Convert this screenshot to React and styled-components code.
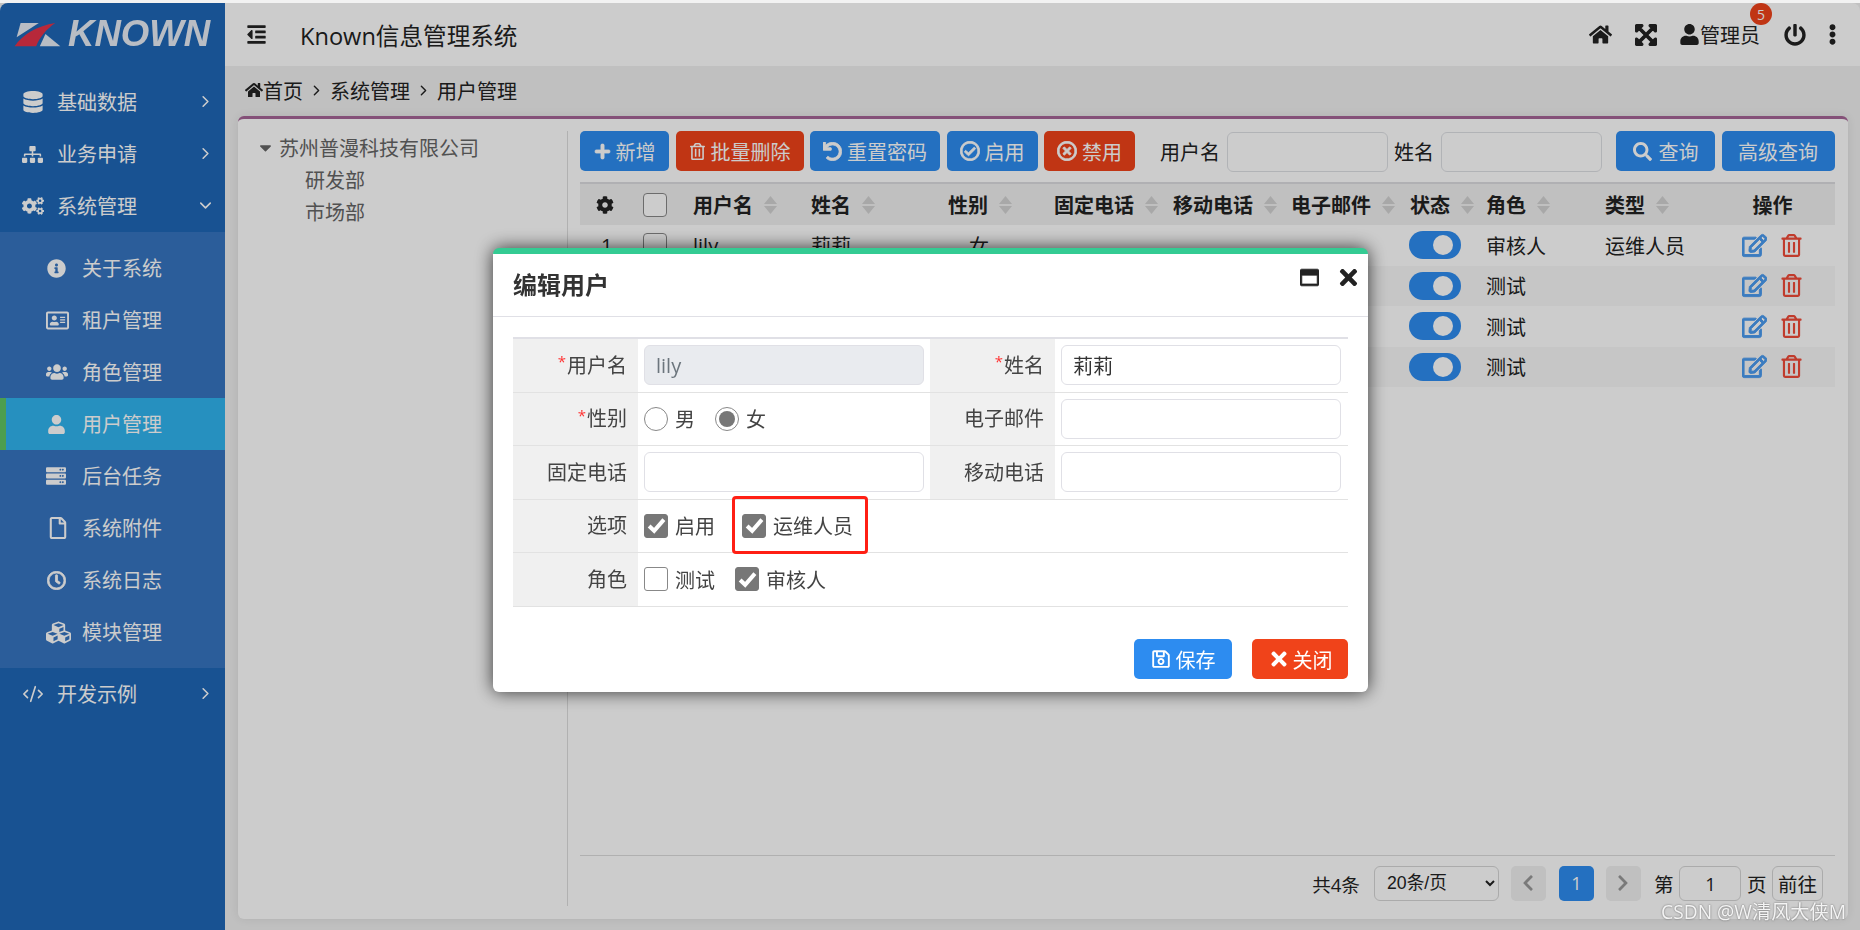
import React from 'react';
import styled, { createGlobalStyle } from 'styled-components';
import {
  FaCaretDown, FaChevronLeft, FaChevronRight, FaCog, FaCogs, FaCubes,
  FaDatabase, FaExpandArrowsAlt, FaEllipsisV, FaHome, FaInfoCircle, FaOutdent,
  FaPlus, FaPowerOff, FaRegAddressCard, FaRegCheckCircle, FaRegClock, FaRegEdit, FaRegFile, FaRegSave,
  FaRegTimesCircle, FaRegTrashAlt, FaRegWindowMaximize, FaSearch, FaServer, FaSitemap, FaTimes, FaUndo,
  FaUser, FaUsers,
} from 'react-icons/fa';
import { ChevronDown, ChevronRight, CodeXml } from 'lucide-react';

const GlobalStyle = createGlobalStyle`
  html, body {
    margin: 0;
    height: 100%;
    overflow: hidden;
    background: #f2f2f2;
  }
  * { box-sizing: border-box; }
  body, input, select, button {
    font-family: "Open Sans", "Noto Sans CJK SC", sans-serif;
    font-size: 20px;
    color: #222;
  }
`;

const Frame = styled.div`
  position: relative;
  display: flex;
  height: 927px;
  margin-top: 3px;
  border-radius: 8px 8px 0 0;
  overflow: hidden;
  background: #f0f0f0;
`;

const Sidebar = styled.aside`
  flex: none;
  width: 225px;
  background: #1e67b7;
  color: #fff;
`;

const Logo = styled.div`
  display: flex;
  align-items: center;
  gap: 7px;
  height: 63px;
  padding-left: 14px;
  margin-bottom: 10px;
`;

const LogoText = styled.span`
  font-family: "Liberation Sans", sans-serif;
  font-weight: 700;
  font-style: italic;
  font-size: 36.6px;
  line-height: 1;
  color: #e8edf5;
  filter: blur(0.5px);
`;

const MenuItem = styled.div`
  display: flex;
  align-items: center;
  height: 52px;
  padding-left: 22px;
  padding-bottom: 2px;
  font-size: 20px;
  background: ${(p) => (p.$active ? '#30b4ef' : 'transparent')};
`;

const SubMenu = styled.div`
  padding: 10px 0;
  background: #3675c1;
`;

const SubItem = styled(MenuItem)`
  padding-left: ${(p) => (p.$active ? '41px' : '47px')};
  border-left: ${(p) => (p.$active ? '6px solid #60c662' : '0')};
`;

const MenuIcon = styled.span`
  display: flex;
  align-items: center;
  width: 35px;
  margin-top: 2px;
  margin-left: ${(p) => p.$shift || 0}px;
  margin-right: ${(p) => -(p.$shift || 0)}px;
`;

const MenuArrow = styled.span`
  display: flex;
  margin-left: auto;
  margin-right: 10px;
`;

const Main = styled.main`
  flex: 1;
  display: flex;
  flex-direction: column;
  min-width: 0;
`;

const Header = styled.header`
  display: flex;
  align-items: center;
  flex: none;
  height: 63px;
  padding-left: 21px;
  background: #fff;
`;

const HeaderTitle = styled.div`
  margin-left: 33px;
  font-size: 23.6px;
`;

const HeaderRight = styled.div`
  display: flex;
  align-items: center;
  margin-left: auto;
  padding-right: 17px;
`;

const HeaderIcon = styled.span`
  display: flex;
  margin-left: ${(p) => p.$gap}px;
  font-size: ${(p) => p.$size}px;
`;

const UserName = styled.span`
  position: relative;
  display: flex;
  align-items: center;
  margin-left: 21px;
`;

const Badge = styled.span`
  position: absolute;
  top: -17px;
  right: -12px;
  display: flex;
  align-items: center;
  justify-content: center;
  width: 22px;
  height: 22px;
  border-radius: 50%;
  background: #f0431a;
  color: #fff;
  font-size: 14px;
`;

const Breadcrumb = styled.nav`
  display: flex;
  align-items: center;
  flex: none;
  height: 50px;
  padding-left: 20px;
  padding-bottom: 2px;
`;

const Crumb = styled.span`
  display: flex;
  align-items: center;
`;

const CrumbSep = styled.span`
  display: flex;
  width: 27px;
  justify-content: center;
`;

const Card = styled.section`
  flex: 1;
  display: flex;
  min-height: 0;
  margin: 0 12px 11px 13px;
  padding: 12px 13px 13px 0;
  background: #fff;
  border-top: 3px solid #a66496;
  border-radius: 6px;
  box-shadow: 0 0 10px rgba(0, 0, 0, 0.08);
`;

const Tree = styled.div`
  flex: none;
  width: 330px;
  padding-left: 18px;
  border-right: 1px solid #dedede;
  color: #666;
`;

const TreeRow = styled.div`
  display: flex;
  align-items: center;
  height: 32px;
  padding-left: ${(p) => (p.$child ? '49px' : '0')};
`;

const TreeCaret = styled.span`
  display: flex;
  width: 23px;
  font-size: 19px;
`;

const RightPane = styled.div`
  flex: 1;
  display: flex;
  flex-direction: column;
  min-width: 0;
  margin-left: 12px;
`;

const Toolbar = styled.div`
  display: flex;
  align-items: center;
  gap: 6.5px;
  height: 40px;
`;

const Button = styled.button`
  display: inline-flex;
  align-items: center;
  justify-content: center;
  gap: ${(p) => p.$gap ?? 5}px;
  flex: none;
  height: 40px;
  margin-left: ${(p) => p.$left || 0}px;
  padding: 0 ${(p) => p.$pad ?? 13}px;
  border: 0;
  border-radius: 5px;
  color: #fff;
  background: ${(p) => (p.$tone === 'danger' ? '#f0431a' : '#2d8cf0')};
`;

const SearchLabel = styled.span`
  flex: none;
  margin-left: ${(p) => p.$gap || 0}px;
`;

const SearchInput = styled.input`
  flex: none;
  width: 161px;
  height: 40px;
  margin-top: 2px;
  border: 1px solid #dee0e4;
  border-radius: 6px;
  background: transparent;
`;

const Table = styled.div`
  flex: 1;
  margin-top: 11px;
`;

const COLUMNS = '53px 50px 118px 137px 106px 119px 118px 119px 76px 119px 119px 121px';

const HeadRow = styled.div`
  display: grid;
  grid-template-columns: ${COLUMNS};
  align-items: center;
  height: 43px;
  border-top: 2px solid #dcdce0;
  background: #f0f0f0;
  font-weight: 700;
`;

const BodyRow = styled.div`
  display: grid;
  grid-template-columns: ${COLUMNS};
  align-items: center;
  height: 40.5px;
  background: ${(p) => (p.$striped ? '#f8f8f8' : '#fff')};
`;

const Cell = styled.div`
  display: flex;
  align-items: center;
  gap: 11px;
  padding-left: ${(p) => p.$pad ?? 10}px;
  white-space: nowrap;
`;

const ActionHead = styled.div`
  padding-right: 4px;
  text-align: center;
`;

const TableCheck = styled.span`
  display: block;
  width: 24px;
  height: 24px;
  border: 1px solid #888;
  border-radius: 4px;
  background: #fff;
`;

const Toggle = styled.span`
  display: flex;
  align-items: center;
  justify-content: flex-end;
  width: 52px;
  height: 28px;
  padding-right: 8px;
  border-radius: 14px;
  background: #2d8cf0;
`;

const ToggleKnob = styled.span`
  width: 20px;
  height: 20px;
  border-radius: 50%;
  background: #fff;
`;

const ActionIcon = styled.span`
  display: flex;
  color: ${(p) => p.$color};
  font-size: ${(p) => p.$size}px;
`;

const Actions = styled.div`
  display: flex;
  align-items: center;
  gap: 13px;
  padding-left: 28px;
`;

const Pager = styled.footer`
  display: flex;
  align-items: center;
  justify-content: flex-end;
  flex: none;
  height: 51px;
  padding: 10px 12px 6px 0;
  border-top: 1px solid #dcdcdc;
  font-size: 19.5px;
`;

const PagerCount = styled.span`
  font-size: 18.6px;
`;

const PagerText = styled.span`
  margin: 0 ${(p) => p.$right}px 0 ${(p) => p.$left}px;
`;

const PageSize = styled.select`
  width: 125px;
  height: 35px;
  margin-left: 14px;
  padding-left: 8px;
  border: 1px solid #d6d6d6;
  border-radius: 6px;
  background: transparent;
  font-family: "Liberation Sans", "Noto Sans CJK SC", sans-serif;
  font-size: 17.7px;
`;

const PageButton = styled.span`
  display: flex;
  align-items: center;
  justify-content: center;
  width: 35px;
  height: 35px;
  margin-left: ${(p) => p.$gap}px;
  border-radius: 5px;
  font-size: 18px;
  color: ${(p) => (p.$current ? '#fff' : '#999')};
  background: ${(p) => (p.$current ? '#2d8cf0' : '#f0f0f0')};
`;

const PageInput = styled.input`
  width: 62px;
  height: 35px;
  border: 1px solid #d6d6d6;
  border-radius: 6px;
  background: transparent;
  text-align: center;
  font-size: 18.6px;
`;

const GoButton = styled.button`
  width: 51px;
  height: 35px;
  padding: 0;
  border: 1px solid #d6d6d6;
  border-radius: 6px;
  background: transparent;
  font-size: 19.5px;
`;

const Overlay = styled.div`
  position: fixed;
  inset: 3px 0 0 0;
  background: rgba(0, 0, 0, 0.2);
`;

const Modal = styled.div`
  position: fixed;
  left: 493px;
  top: 248px;
  display: flex;
  flex-direction: column;
  width: 875px;
  height: 444px;
  border-top: 6px solid #34cb93;
  border-radius: 6px;
  background: #fff;
  box-shadow: 0 0 18px rgba(0, 0, 0, 0.75);
`;

const ModalHead = styled.div`
  display: flex;
  align-items: center;
  flex: none;
  height: 63px;
  padding: 0 7px 0 20px;
  border-bottom: 1px solid #e0e0e6;
`;

const ModalTitle = styled.h3`
  margin: 0 0 4px;
  font-size: 24px;
  font-weight: 700;
  color: #333;
`;

const ModalTools = styled.div`
  display: flex;
  align-items: center;
  gap: 17px;
  margin: 0 0 15px auto;
  color: #222;
`;

const FormTable = styled.div`
  margin: 20px 20px 0;
  border-top: 2px solid #e0e0e6;
`;

const FormRow = styled.div`
  display: grid;
  grid-template-columns: 125px 292px 125px 293px;
  height: 53.5px;
  border-bottom: 1px solid #e2e2e2;
`;

const FormLabel = styled.div`
  display: flex;
  align-items: center;
  justify-content: flex-end;
  padding: 0 11px 2px 0;
  background: #f0f0f0;
  color: #444;
`;

const Required = styled.span`
  align-self: flex-start;
  margin: 12px 1px 0 0;
  color: #f33;
  font-size: 15px;
`;

const FormValue = styled.div`
  position: relative;
  display: flex;
  align-items: center;
  padding-left: 6px;
  grid-column: ${(p) => (p.$wide ? 'span 3' : 'auto')};
`;

const TextInput = styled.input`
  width: 280px;
  height: 40px;
  padding: 0 11px;
  border: 1px solid #e0e0e6;
  border-radius: 6px;
  background: ${(p) => (p.disabled ? '#e9ebef' : '#fff')};
  color: ${(p) => (p.disabled ? '#6c757d' : '#333')};
`;

const Choice = styled.label`
  display: flex;
  align-items: center;
  gap: 7px;
  margin-right: ${(p) => p.$gap}px;
  color: #444;
`;

const RadioMark = styled.span`
  display: flex;
  align-items: center;
  justify-content: center;
  width: 24px;
  height: 24px;
  border: 1px solid #888;
  border-radius: 50%;
  &::after {
    content: '';
    display: ${(p) => (p.$on ? 'block' : 'none')};
    width: 16px;
    height: 16px;
    border-radius: 50%;
    background: #777;
  }
`;

const CheckMark = styled.span`
  display: flex;
  align-items: center;
  justify-content: center;
  flex: none;
  width: 24px;
  height: 24px;
  border: 1px solid ${(p) => (p.$on ? '#777' : '#888')};
  border-radius: 3px;
  background: ${(p) => (p.$on ? '#777' : '#fff')};
`;

const Highlight = styled.span`
  position: absolute;
  left: 94px;
  top: -4px;
  width: 136px;
  height: 58px;
  border: 3px solid #ff1f14;
  border-radius: 4px;
  pointer-events: none;
`;

const ModalFoot = styled.div`
  display: flex;
  justify-content: flex-end;
  gap: 20px;
  margin-top: auto;
  padding: 0 20px 13px;
`;

const Watermark = styled.div`
  position: fixed;
  right: 14px;
  bottom: 5px;
  color: rgba(255, 255, 255, 0.9);
  font-size: 19.2px;
  text-shadow: 0 0 2px rgba(0, 0, 0, 0.55);
`;

const Check = () => (
  <svg width="19" height="17" viewBox="0 0 18 16">
    <path d="M2 8.5 L6.8 13 L16 2.5" fill="none" stroke="#fff" strokeWidth="3.8" />
  </svg>
);

const SortArrows = () => (
  <svg width="13" height="18" viewBox="0 0 13 18">
    <path d="M6.5 0 L13 8 L0 8 Z M0 10 L13 10 L6.5 18 Z" fill="#d2d2d2" />
  </svg>
);

const KnownMark = () => (
  <svg width="47" height="25" viewBox="0 0 142 73">
    <path d="M20 2 H75 L8 45 Z" fill="#e8edf5" />
    <path d="M95 35 L140 72 H78 Z" fill="#e8edf5" />
    <path d="M2 72 C25 38 70 10 125 2 C98 20 78 45 67 72 Z" fill="#e53349" />
  </svg>
);

// FA5 outline glyphs are thinner than the ones on the page, so they get a stroke
const heavy = { stroke: 'currentColor', strokeWidth: 22 };

const MENU_TOP = [
  { label: '基础数据', icon: <FaDatabase size={22} />, arrow: <ChevronRight size={19} strokeWidth={2} /> },
  { label: '业务申请', icon: <FaSitemap size={21} />, arrow: <ChevronRight size={19} strokeWidth={2} /> },
  { label: '系统管理', icon: <FaCogs size={22} />, arrow: <ChevronDown size={19} strokeWidth={2} /> },
];

const MENU_SUB = [
  { label: '关于系统', icon: <FaInfoCircle size={19} /> },
  { label: '租户管理', icon: <FaRegAddressCard size={23} />, shift: -1 },
  { label: '角色管理', icon: <FaUsers size={22} />, shift: -1 },
  { label: '用户管理', icon: <FaUser size={19} /> },
  { label: '后台任务', icon: <FaServer size={20} />, shift: -1 },
  { label: '系统附件', icon: <FaRegFile size={22} /> },
  { label: '系统日志', icon: <FaRegClock size={19} {...heavy} /> },
  { label: '模块管理', icon: <FaCubes size={25} />, shift: -1 },
];

const HEADS = ['用户名', '姓名', '性别', '固定电话', '移动电话', '电子邮件', '状态', '角色', '类型'];

const ROWS = [
  { no: 1, user: 'lily', name: '莉莉', sex: '女', role: '审核人', type: '运维人员' },
  { role: '测试' },
  { role: '测试' },
  { role: '测试' },
];

const App = () => (
  <>
    <GlobalStyle />
    <Frame>
      <Sidebar>
        <Logo>
          <KnownMark />
          <LogoText>KNOWN</LogoText>
        </Logo>
        {MENU_TOP.map((m) => (
          <MenuItem key={m.label}>
            <MenuIcon>{m.icon}</MenuIcon>
            {m.label}
            <MenuArrow>{m.arrow}</MenuArrow>
          </MenuItem>
        ))}
        <SubMenu>
          {MENU_SUB.map((m) => (
            <SubItem key={m.label} $active={m.label === '用户管理'}>
              <MenuIcon $shift={m.shift}>{m.icon}</MenuIcon>
              {m.label}
            </SubItem>
          ))}
        </SubMenu>
        <MenuItem>
          <MenuIcon><CodeXml size={22} strokeWidth={1.8} /></MenuIcon>
          开发示例
          <MenuArrow><ChevronRight size={19} strokeWidth={2} /></MenuArrow>
        </MenuItem>
      </Sidebar>

      <Main>
        <Header>
          <FaOutdent size={21} />
          <HeaderTitle>Known信息管理系统</HeaderTitle>
          <HeaderRight>
            <HeaderIcon $gap={0} $size={23}><FaHome /></HeaderIcon>
            <HeaderIcon $gap={22} $size={24}><FaExpandArrowsAlt {...heavy} /></HeaderIcon>
            <UserName>
              <FaUser size={21} />
              管理员
              <Badge>5</Badge>
            </UserName>
            <HeaderIcon $gap={24} $size={22}><FaPowerOff /></HeaderIcon>
            <HeaderIcon $gap={16} $size={21}><FaEllipsisV /></HeaderIcon>
          </HeaderRight>
        </Header>

        <Breadcrumb>
          <Crumb><FaHome size={18} />首页</Crumb>
          <CrumbSep><ChevronRight size={17} strokeWidth={2} /></CrumbSep>
          <Crumb>系统管理</Crumb>
          <CrumbSep><ChevronRight size={17} strokeWidth={2} /></CrumbSep>
          <Crumb>用户管理</Crumb>
        </Breadcrumb>

        <Card>
          <Tree>
            <TreeRow>
              <TreeCaret><FaCaretDown /></TreeCaret>
              苏州普漫科技有限公司
            </TreeRow>
            <TreeRow $child>研发部</TreeRow>
            <TreeRow $child>市场部</TreeRow>
          </Tree>

          <RightPane>
            <Toolbar>
              <Button $pad={13.5}><FaPlus size={17} {...heavy} />新增</Button>
              <Button $tone="danger"><FaRegTrashAlt size={17} />批量删除</Button>
              <Button><FaUndo size={19} {...heavy} />重置密码</Button>
              <Button><FaRegCheckCircle size={20} {...heavy} />启用</Button>
              <Button $tone="danger"><FaRegTimesCircle size={20} {...heavy} />禁用</Button>
              <SearchLabel $gap={18.5}>用户名</SearchLabel>
              <SearchInput />
              <SearchLabel>姓名</SearchLabel>
              <SearchInput />
              <Button $left={8} $pad={16.5} $gap={7}><FaSearch size={19} />查询</Button>
              <Button $pad={16.5}>高级查询</Button>
            </Toolbar>

            <Table>
              <HeadRow>
                <Cell $pad={16}><FaCog size={18} /></Cell>
                <Cell $pad={10}><TableCheck /></Cell>
                {HEADS.map((h) => (
                  <Cell key={h}>{h}<SortArrows /></Cell>
                ))}
                <ActionHead>操作</ActionHead>
              </HeadRow>
              {ROWS.map((r, i) => (
                <BodyRow key={i} $striped={i % 2 === 1}>
                  <Cell $pad={21}>{r.no}</Cell>
                  <Cell $pad={10}><TableCheck /></Cell>
                  <Cell>{r.user}</Cell>
                  <Cell>{r.name}</Cell>
                  <Cell $pad={31}>{r.sex}</Cell>
                  <Cell />
                  <Cell />
                  <Cell />
                  <Cell $pad={9}><Toggle><ToggleKnob /></Toggle></Cell>
                  <Cell>{r.role}</Cell>
                  <Cell>{r.type}</Cell>
                  <Actions>
                    <ActionIcon $color="#4a9bf0" $size={25}><FaRegEdit {...heavy} /></ActionIcon>
                    <ActionIcon $color="#f04a38" $size={23}><FaRegTrashAlt /></ActionIcon>
                  </Actions>
                </BodyRow>
              ))}
            </Table>

            <Pager>
              <PagerCount>共4条</PagerCount>
              <PageSize defaultValue="20">
                <option value="20">20条/页</option>
                <option value="50">50条/页</option>
              </PageSize>
              <PageButton $gap={12}><FaChevronLeft /></PageButton>
              <PageButton $gap={13} $current>1</PageButton>
              <PageButton $gap={12}><FaChevronRight /></PageButton>
              <PagerText $left={13} $right={6}>第</PagerText>
              <PageInput defaultValue="1" />
              <PagerText $left={5.5} $right={5.5}>页</PagerText>
              <GoButton>前往</GoButton>
            </Pager>
          </RightPane>
        </Card>
      </Main>
    </Frame>

    <Overlay />

    <Modal>
      <ModalHead>
        <ModalTitle>编辑用户</ModalTitle>
        <ModalTools>
          <FaRegWindowMaximize size={19} {...heavy} />
          <FaTimes size={25} />
        </ModalTools>
      </ModalHead>

      <FormTable>
        <FormRow>
          <FormLabel><Required>*</Required>用户名</FormLabel>
          <FormValue><TextInput disabled defaultValue="lily" /></FormValue>
          <FormLabel><Required>*</Required>姓名</FormLabel>
          <FormValue><TextInput defaultValue="莉莉" /></FormValue>
        </FormRow>
        <FormRow>
          <FormLabel><Required>*</Required>性别</FormLabel>
          <FormValue>
            <Choice $gap={20}><RadioMark />男</Choice>
            <Choice $gap={0}><RadioMark $on />女</Choice>
          </FormValue>
          <FormLabel>电子邮件</FormLabel>
          <FormValue><TextInput /></FormValue>
        </FormRow>
        <FormRow>
          <FormLabel>固定电话</FormLabel>
          <FormValue><TextInput /></FormValue>
          <FormLabel>移动电话</FormLabel>
          <FormValue><TextInput /></FormValue>
        </FormRow>
        <FormRow>
          <FormLabel>选项</FormLabel>
          <FormValue $wide>
            <Choice $gap={27}><CheckMark $on><Check /></CheckMark>启用</Choice>
            <Choice $gap={0}><CheckMark $on><Check /></CheckMark>运维人员</Choice>
            <Highlight />
          </FormValue>
        </FormRow>
        <FormRow>
          <FormLabel>角色</FormLabel>
          <FormValue $wide>
            <Choice $gap={20}><CheckMark />测试</Choice>
            <Choice $gap={0}><CheckMark $on><Check /></CheckMark>审核人</Choice>
          </FormValue>
        </FormRow>
      </FormTable>

      <ModalFoot>
        <Button $pad={16.5}><FaRegSave size={20} />保存</Button>
        <Button $tone="danger" $pad={15.5} $gap={3}><FaTimes size={22} />关闭</Button>
      </ModalFoot>
    </Modal>

    <Watermark>CSDN @W清风大侠M</Watermark>
  </>
);

export default App;
